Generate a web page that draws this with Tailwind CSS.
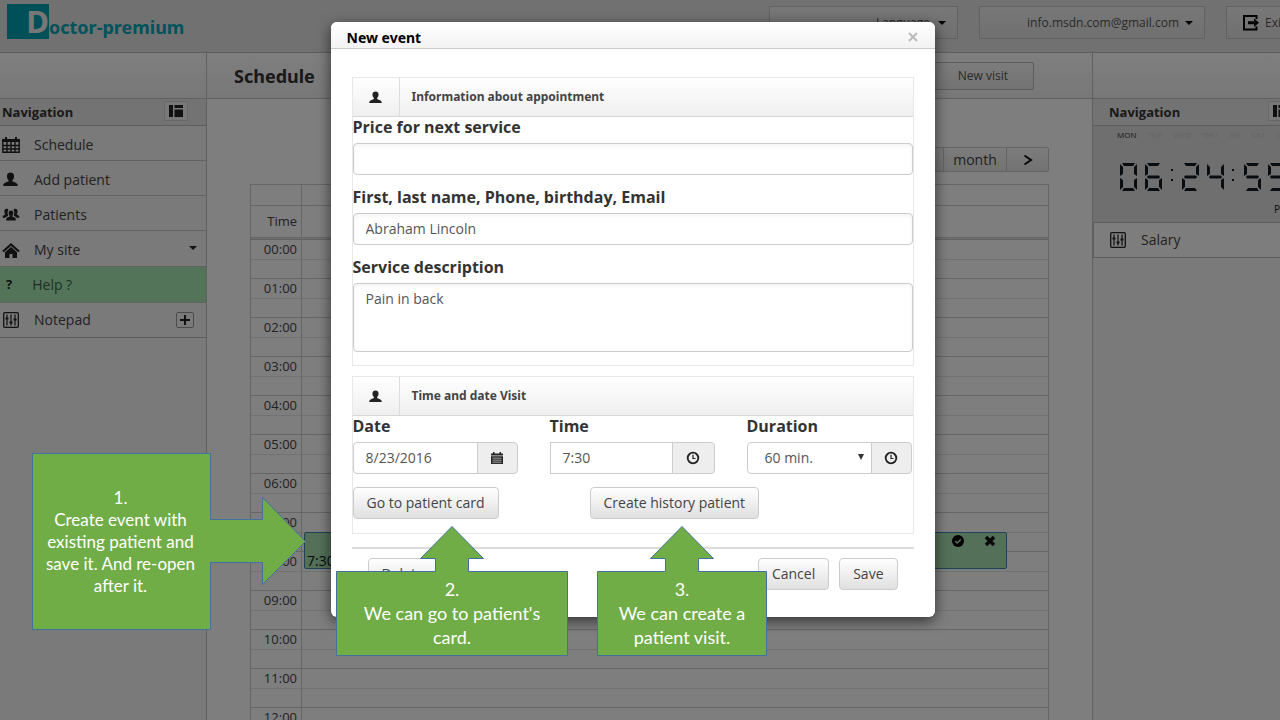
<!DOCTYPE html>
<html lang="en">
<head>
<meta charset="utf-8">
<title>Doctor-premium</title>
<script src="https://cdn.jsdelivr.net/npm/@tailwindcss/browser@4"></script>
</head>
<body class="relative h-screen overflow-hidden bg-[#f8f8f8] font-['Open_Sans','Noto_Sans',sans-serif] text-sm text-[#555]">
<svg class="hidden">
  <symbol id="user" viewBox="0 0 14 14"><path d="M7 0.5c2 0 3.3 1.3 3.3 3.4 0 1.6-.6 2.9-1.5 3.7v1.1c.6.6 4.7 1.400 4.900 3.300V13H.3v-1c.2-1.900 4.300-2.700 4.900-3.300V7.600C4.300 6.800 3.700 5.500 3.700 3.900 3.700 1.800 5 .5 7 .5z"/></symbol>
  <symbol id="users" viewBox="0 0 18 14"><path d="M9 2.500c1.500 0 2.400 1 2.400 2.500 0 1.200-.4 2.100-1 2.700v.8c.4.500 3.300.9 3.400 2.500v1.500H4.200V11c.1-1.600 3-2 3.400-2.500v-.8c-.6-.6-1-1.500-1-2.700 0-1.500.9-2.500 2.400-2.500z"/><path d="M4.500.8c1 0 1.700.4 2 1.100C5.500 3 5.300 5.200 6.200 7.400 5 8.400 3.800 8.800 3.300 9.700H.7V8.500C.8 7.400 3 7 3.200 6.600V6C2.700 5.500 2.400 4.500 2.400 3.400 2.400 1.800 3.200.8 4.500.8zM13.500.8c-1 0-1.700.4-2 1.100 1 1.100 1.200 3.300.3 5.500 1.200 1 2.400 1.400 2.900 2.300h2.600V8.500c-.1-1.100-2.300-1.500-2.500-1.900V6c.5-.5.8-1.500.8-2.600 0-1.600-.8-2.600-2.100-2.600z"/></symbol>
  <symbol id="sliders" viewBox="0 0 16 16"><rect x=".7" y=".7" width="14.600" height="14.600" rx="1" fill="none" stroke="currentColor" stroke-width="1.300"/><path d="M4 2.500v11M8 2.500v11M12 2.500v11" stroke="currentColor" stroke-width="1.200"/><path d="M2.500 5.500h3v2h-3zM6.500 9.500h3v2h-3zM10.500 6.500h3v2h-3z"/></symbol>
  <symbol id="clock" viewBox="0 0 14 14"><circle cx="7" cy="7" r="5.300" fill="none" stroke="currentColor" stroke-width="1.800"/><path d="M7 3.800V7.500H9.500" fill="none" stroke="currentColor" stroke-width="1.200"/></symbol>
  <symbol id="layout" viewBox="0 0 14 12"><path d="M0 0h4v12H0zM5.500 0H14v3H5.500zM5.500 4.500H14V12H5.500z"/></symbol>
</svg>

<div class="flex h-full flex-col overflow-hidden">
  <header class="flex h-[53px] shrink-0 items-start justify-between overflow-hidden border-b border-[#bbb] bg-[#e3e3e3]">
    <a href="#" class="ml-[7px] mt-1 flex items-end font-['Noto_Sans','Open_Sans',sans-serif] font-bold text-[#00a5b8]">
      <span class="flex h-[35px] w-[42px] items-end justify-end bg-[#00a0b4] text-[31px] leading-[35px] text-[#eee]">D</span>
      <span class="text-lg leading-[23px]">octor-premium</span>
    </a>
    <div class="-mr-4 mt-1.5 flex gap-[21px] text-xs">
      <button class="flex h-[33px] w-[189px] items-center justify-end gap-2 border border-[#c4c4c4] bg-linear-to-b from-[#f0f0f0] to-[#e0e0e0] pr-[11px]">Language <svg class="h-1 w-2" viewBox="0 0 8 4"><path d="M0 0h8L4 4z"/></svg></button>
      <button class="flex h-[33px] w-[226px] items-center justify-end gap-[6px] border border-[#c4c4c4] bg-linear-to-b from-[#f0f0f0] to-[#e0e0e0] pr-[11px]">info.msdn.com@gmail.com <svg class="h-1 w-2" viewBox="0 0 8 4"><path d="M0 0h8L4 4z"/></svg></button>
      <button class="flex h-[33px] w-[70px] items-center gap-1.5 border border-[#c4c4c4] bg-linear-to-b from-[#f0f0f0] to-[#e0e0e0] pl-4"><svg class="h-4 w-4 text-black" viewBox="0 0 16 16"><path d="M13.500 4V1H1v13.500h12.500V11.500" fill="none" stroke="currentColor" stroke-width="2"/><path d="M5 6.300h6V3.500L16 7.700l-5 4.200V9.200H5z"/></svg>Exit</button>
    </div>
  </header>

  <div class="flex min-h-0 flex-1">
    <aside class="w-[207px] shrink-0 border-r border-[#c2c2c2] bg-[#f4f4f4]">
      <div class="h-[46px] border-b border-[#c2c2c2] bg-linear-to-b from-[#fdfdfd] to-[#f0f0f0]"></div>
      <div class="flex h-[27px] items-center justify-between border-b border-[#bbb] bg-[#e6e6e6] pl-0.5 pr-[18px]">
        <h2 class="text-[13px] font-bold text-[#333]">Navigation</h2>
        <button aria-label="Toggle" class="mb-0.5 flex h-5 w-6 items-center justify-center border border-[#d0d0d0] bg-[#f0f0f0]"><svg class="h-3 w-3.5" fill="#222"><use href="#layout"/></svg></button>
      </div>
      <nav class="text-[#444]">
        <a href="#" class="flex h-[35px] items-center gap-[14px] border-b border-[#c2c2c2] pl-0.5 pt-[3px]"><svg class="h-4 w-[18px]" viewBox="0 0 18 16"><path d="M0 2h3V0h2v2h8V0h2v2h3v3H0z" fill="#222"/><path d="M.8 5v10.300h16.400V5M.8 8.500h16.400M.8 12h16.400M5 5v10M9 5v10M13 5v10" fill="none" stroke="#222" stroke-width="1.400"/></svg>Schedule</a>
        <a href="#" class="flex h-[35px] items-center gap-4 border-b border-[#c2c2c2] pl-[3px] pt-[3px]"><svg class="h-[15px] w-[15px]" fill="#222"><use href="#user"/></svg>Add patient</a>
        <a href="#" class="flex h-[35px] items-center gap-[14px] border-b border-[#c2c2c2] pl-0.5 pt-[3px]"><svg class="h-3.5 w-[18px]" fill="#222"><use href="#users"/></svg>Patients</a>
        <a href="#" class="flex h-[36px] items-center gap-[14px] border-b border-[#c2c2c2] pl-0.5 pt-[3px]"><svg class="h-[15px] w-[18px]" viewBox="0 0 18 15"><path d="M1 8.500l8-7 8 7" fill="none" stroke="#222" stroke-width="2.200"/><path d="M3 9.300l6-5.200 6 5.200V15h-4.500v-4h-3v4H3z" fill="#222"/></svg>My site<svg class="ml-auto mr-[9px] mb-1 h-1 w-2" viewBox="0 0 8 4" fill="#222"><path d="M0 0h8L4 4z"/></svg></a>
        <a href="#" class="flex h-[36px] items-center gap-5 border-b border-[#c2c2c2] bg-[#a8e8b4] pl-1.5 text-[#396342]"><b class="text-[13px] text-[#222]">?</b>Help ?</a>
        <a href="#" class="flex h-[35px] items-center gap-[14px] border-b border-[#bbb] pl-0.5"><svg class="h-4 w-[18px] text-[#222]" fill="currentColor"><use href="#sliders"/></svg>Notepad<span class="ml-auto mr-3 flex h-4 w-[18px] items-center justify-center rounded-xs border border-[#999]"><svg class="h-2.5 w-2.5" viewBox="0 0 10 10"><path d="M5 0v10M0 5h10" stroke="#222" stroke-width="2"/></svg></span></a>
      </nav>
    </aside>

    <main class="min-w-0 flex-1 overflow-hidden bg-[#fcfcfc]">
      <div class="flex h-[46px] items-center justify-between border-b border-[#c2c2c2] bg-linear-to-b from-[#fdfdfd] to-[#f0f0f0] pl-[27px] pr-[58px]">
        <h1 class="font-['Noto_Sans','Open_Sans',sans-serif] text-lg font-bold text-[#333]">Schedule</h1>
        <button class="h-7 rounded-xs border border-[#bbb] bg-linear-to-b from-[#f8f8f8] to-[#e6e6e6] px-[25px] text-xs">New visit</button>
      </div>
      <div class="relative px-[43px] pt-12">
        <div class="mb-3 ml-auto flex h-[25px] w-[180px] rounded-xs border border-[#c8c8c8] bg-linear-to-b from-[#f8f8f8] to-[#e6e6e6] text-sm text-[#444]">
          <span class="flex-1"></span>
          <button class="w-16 border-x border-[#c8c8c8]">month</button>
          <button aria-label="Next" class="flex w-[41px] items-center justify-center"><svg class="h-3 w-2.5" viewBox="0 0 10 12"><path d="M1.500 1.500l6.500 4.500-6.500 4.500" fill="none" stroke="#111" stroke-width="2"/></svg></button>
        </div>
        <table class="w-full table-fixed border-collapse border border-[#ccc] text-[13px] text-[#444]">
          <colgroup><col class="w-[51px]"><col></colgroup>
          <thead>
            <tr class="h-[21px]"><td class="border border-[#ccc]"></td><td class="border border-[#ccc]"></td></tr>
            <tr class="h-8"><th class="border border-[#ccc] pr-1 text-right font-normal">Time</th><td class="border border-[#ccc]"></td></tr>
            <tr class="h-[2px]"><td colspan="2" class="border border-[#c4c4c4] bg-[#e0e0e0]"></td></tr>
          </thead>
          <tbody id="slots"></tbody>
        </table>
        <div class="absolute left-[97px] right-[85px] top-[433px] h-[37px] rounded-xs border border-[#3a87ad] bg-[#a8e0b2] text-[#111]">
          <span class="absolute bottom-[-3px] left-0.5 text-sm">7:30</span>
          <div class="flex justify-end gap-5 pr-2.5 pt-0.5">
            <svg class="h-3 w-3" viewBox="0 0 12 12"><circle cx="6" cy="6" r="6"/><path d="M3.200 6l2 2 3.600-3.600" fill="none" stroke="#a8e0b2" stroke-width="1.500"/></svg>
            <svg class="h-3 w-3" viewBox="0 0 12 12"><path d="M2 2l8 8M10 2l-8 8" stroke="currentColor" stroke-width="3.500"/></svg>
          </div>
        </div>
      </div>
    </main>

    <aside class="w-[188px] shrink-0 overflow-hidden border-l border-[#c2c2c2] bg-[#f4f4f4]">
      <div class="h-[46px] border-b border-[#c2c2c2] bg-linear-to-b from-[#fdfdfd] to-[#f0f0f0]"></div>
      <div class="flex h-[27px] items-center justify-between border-b border-[#bbb] bg-[#e6e6e6] pl-4">
        <h2 class="text-[13px] font-bold text-[#333]">Navigation</h2>
        <button aria-label="Toggle" class="-mr-3 mb-0.5 flex h-5 w-6 items-center justify-center border border-[#d0d0d0] bg-[#f0f0f0]"><svg class="h-3 w-3.5" fill="#222"><use href="#layout"/></svg></button>
      </div>
      <div class="h-24 overflow-hidden bg-[#dedede] pl-6 pt-[3px]">
        <div class="flex w-52 gap-[11px] text-[8px] leading-3 text-[#ccc]"><span class="text-[#333]">MON</span><span>TUE</span><span>WED</span><span>THU</span><span>FRI</span><span>SAT</span><span>SUN</span></div>
        <svg id="lcd" class="ml-[3px] mt-[22px] h-8 w-[180px]" role="img" aria-label="06:24:59" fill="#151a20"></svg>
        <div class="ml-[157px] mt-1.5 text-[10px] leading-4 text-[#222]">PM</div>
      </div>
      <a href="#" class="flex h-9 w-52 items-center gap-3.5 border border-[#bbb] bg-[#fbfbfb] pl-[15px] text-[#444]"><svg class="h-4 w-[18px] text-[#222]" fill="currentColor"><use href="#sliders"/></svg>Salary</a>
    </aside>
  </div>
</div>

<div class="absolute inset-0 bg-black/50 pr-[15px] pt-[22px]">
  <div role="dialog" aria-labelledby="dlg" class="mx-auto w-[604px] rounded-md bg-white shadow-[0_4px_14px_rgba(0,0,0,0.6)]">
    <div class="flex h-[27px] items-center justify-between rounded-t-md border-b border-[#ccc] bg-linear-to-b from-white to-[#f3f3f3] pl-4 pr-4">
      <h2 id="dlg" class="pt-1.5 font-['Noto_Sans','Open_Sans',sans-serif] text-sm font-bold text-black">New event</h2>
      <button aria-label="Close" class="pt-1"><svg class="h-3 w-3" viewBox="0 0 12 12"><path d="M2 2l8 8M10 2l-8 8" stroke="#bbb" stroke-width="2"/></svg></button>
    </div>
    <form class="px-[21px] pb-[27px] pt-7">
      <section class="border border-[#e8e8e8] pb-[13px]">
        <div class="flex h-[39px] items-center border-b border-[#d6d6d6] bg-linear-to-b from-white to-[#efefef]">
          <span class="flex h-full w-[47px] items-center justify-center border-r border-[#ddd]"><svg class="h-[13px] w-[13px]" fill="#222"><use href="#user"/></svg></span>
          <h3 class="pl-3 font-['Noto_Sans','Open_Sans',sans-serif] text-xs font-bold text-[#444]">Information about appointment</h3>
        </div>
        <label for="price" class="block text-base leading-5 font-bold text-[#333]">Price for next service</label>
        <input id="price" class="mt-1.5 block h-8 w-full rounded border border-[#ccc] px-3 shadow-inner shadow-black/5">
        <label for="name" class="mt-3 block text-base leading-5 font-bold text-[#333]">First, last name, Phone, birthday, Email</label>
        <input id="name" value="Abraham Lincoln" class="mt-1.5 block h-8 w-full rounded border border-[#ccc] px-3 pb-0.5 text-[#555] shadow-inner shadow-black/5">
        <label for="desc" class="mt-3 block text-base leading-5 font-bold text-[#333]">Service description</label>
        <textarea id="desc" class="mt-1.5 block h-[69px] w-full resize-none rounded border border-[#ccc] px-3 py-[5px] text-[#555] shadow-inner shadow-black/5">Pain in back</textarea>
      </section>
      <section class="mt-2.5 border border-[#e8e8e8] pb-3.5">
        <div class="flex h-[39px] items-center border-b border-[#d6d6d6] bg-linear-to-b from-white to-[#efefef]">
          <span class="flex h-full w-[47px] items-center justify-center border-r border-[#ddd]"><svg class="h-[13px] w-[13px]" fill="#222"><use href="#user"/></svg></span>
          <h3 class="pl-3 font-['Noto_Sans','Open_Sans',sans-serif] text-xs font-bold text-[#444]">Time and date Visit</h3>
        </div>
        <div class="flex gap-8">
          <div class="w-[165px]">
            <label for="date" class="block text-base leading-5 font-bold text-[#333]">Date</label>
            <div class="mt-1.5 flex h-8">
              <input id="date" value="8/23/2016" class="w-[125px] rounded-l border border-[#ccc] px-3 text-[#555]">
              <span class="-ml-px flex flex-1 items-center justify-center rounded-r border border-[#ccc] bg-[#eee]"><svg class="h-3 w-3" viewBox="0 0 12 12"><path d="M0 1.500h2V0h1.500v1.500h5V0H10v1.500h2v2H0zM0 4.300h12V12H0z" fill="#222"/><path d="M1 6.300h10M1 8.300h10M1 10.300h10M3 5v6.500M5 5v6.500M7 5v6.500M9 5v6.500" stroke="#bbb" stroke-width=".5"/></svg></span>
            </div>
          </div>
          <div class="w-[165px]">
            <label for="time" class="block text-base leading-5 font-bold text-[#333]">Time</label>
            <div class="mt-1.5 flex h-8">
              <input id="time" value="7:30" class="w-[123px] border border-[#ccc] px-3 text-[#555]">
              <span class="-ml-px flex flex-1 items-center justify-center rounded-r border border-[#ccc] bg-[#eee]"><svg class="h-3.5 w-3.5 text-[#222]"><use href="#clock"/></svg></span>
            </div>
          </div>
          <div class="w-[165px]">
            <label for="dur" class="block text-base leading-5 font-bold text-[#333]">Duration</label>
            <div class="mt-1.5 flex h-8">
              <span class="relative w-[125px]">
                <select id="dur" class="h-full w-full appearance-none rounded-l border border-[#ccc] bg-white pl-[17px] text-[#555]"><option>60 min.</option></select>
                <svg class="pointer-events-none absolute right-2 top-3 h-1.5 w-1.5" viewBox="0 0 6 6"><path d="M0 0h6L3 6z" fill="#333"/></svg>
              </span>
              <span class="-ml-px flex flex-1 items-center justify-center rounded-r border border-[#ccc] bg-[#eee]"><svg class="h-3.5 w-3.5 text-[#222]"><use href="#clock"/></svg></span>
            </div>
          </div>
        </div>
        <div class="mt-[13px] flex gap-[91px]">
          <button type="button" class="h-8 rounded border border-[#ccc] bg-linear-to-b from-white to-[#e0e0e0] px-[13px] text-[#444]">Go to patient card</button>
          <button type="button" class="h-8 rounded border border-[#ccc] bg-linear-to-b from-white to-[#e0e0e0] px-[13px] text-[#444]">Create history patient</button>
        </div>
      </section>
      <div class="mt-[13px] flex border-t-2 border-[#ddd] pl-4 pr-4 pt-[9px]">
        <button type="button" class="mr-auto h-8 rounded border border-[#ccc] bg-linear-to-b from-white to-[#e0e0e0] px-[13px] text-[#444]">Delete</button>
        <button type="button" class="mr-2.5 h-8 rounded border border-[#ccc] bg-linear-to-b from-white to-[#e0e0e0] px-[13px] text-[#444]">Cancel</button>
        <button type="submit" class="h-8 rounded border border-[#ccc] bg-linear-to-b from-white to-[#e0e0e0] px-[13px] text-[#444]">Save</button>
      </div>
    </form>
  </div>
</div>

<div class="absolute left-8 top-[453px] h-[177px] w-[274px] font-['Lato','Liberation_Sans',sans-serif] text-[17px] leading-[22px] text-white">
  <svg class="absolute inset-0 h-full w-full" viewBox="0 0 274 177"><path d="M.5.5h178v66h52v-22l43 44-43 43v-22h-52v67H.5z" fill="#70ad47" stroke="#41719c"/></svg>
  <p class="relative flex h-full w-[177px] flex-col justify-center text-center">1.<br>Create event with<br>existing patient and<br>save it. And re-open<br>after it.</p>
</div>
<div class="absolute left-[336px] top-[526px] w-[232px] pt-[51px] font-['Lato','Liberation_Sans',sans-serif] text-lg leading-6 text-white">
  <svg class="absolute left-0 top-0 h-[130px] w-[232px]" viewBox="0 0 232 130"><path d="M.5 45.500h99v-13h-15l31.500-32 31.500 32h-15v13h99v84H.5z" fill="#70ad47" stroke="#41719c"/></svg>
  <p class="relative text-center">2.<br>We can go to patient's<br>card.</p>
</div>
<div class="absolute left-[597px] top-[526px] w-[170px] pt-[51px] font-['Lato','Liberation_Sans',sans-serif] text-lg leading-6 text-white">
  <svg class="absolute left-0 top-0 h-[130px] w-[170px]" viewBox="0 0 170 130"><path d="M.5 45.500h68v-13h-15l31.500-32 31.500 32h-15v13h68v84H.5z" fill="#70ad47" stroke="#41719c"/></svg>
  <p class="relative text-center">3.<br>We can create a<br>patient visit.</p>
</div>

<script>
  // Hour and half-hour rows of the day grid
  let rows = '';
  for (let h = 0; h <= 12; h++) {
    rows += `<tr class="h-5"><td class="border-x border-t border-[#ccc] pr-1 text-right align-top leading-[18px]">${String(h).padStart(2, '0')}:00</td><td class="border-x border-t border-[#ccc]"></td></tr>` +
      '<tr class="h-[19px]"><td class="border-x border-t border-x-[#ccc] border-t-[#e4e4e4]"></td><td class="border-x border-t border-x-[#ccc] border-t-[#e4e4e4]"></td></tr>';
  }
  document.getElementById('slots').innerHTML = rows;

  // Seven-segment clock: segments a..g per digit
  const seg = {
    a: 'M2 0h13l-2 3H4z', b: 'M17 1v12l-3-2V4z', c: 'M17 15v12l-3-3v-7z', d: 'M4 25h9l2 3H2z',
    e: 'M0 15l3 2v7l-3 3z', f: 'M0 1l3 3v7l-3 2z', g: 'M3 12.500h11l1 1.500-1 1.500H3L2 14z'
  };
  const digits = [[0, 'abcdef'], [25, 'acdefg'], [62, 'abdeg'], [87, 'bcfg'], [124, 'acdfg'], [148, 'abcdfg']];
  let lcd = '';
  for (const [x, on] of digits)
    lcd += `<g transform="translate(${x} 0)">` + [...on].map(s => `<path d="${seg[s]}"/>`).join('') + '</g>';
  for (const x of [51, 112]) lcd += `<path d="M${x} 6h2v2h-2zM${x} 16h2v2h-2z"/>`;
  document.getElementById('lcd').innerHTML = lcd;
</script>
</body>
</html>
